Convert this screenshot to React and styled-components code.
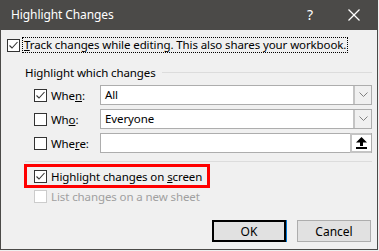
import React from 'react';
import styled, { createGlobalStyle } from 'styled-components';

const GlobalStyle = createGlobalStyle`
  html, body {
    margin: 0;
    padding: 0;
    background: #f0f0f0;
  }
  * {
    box-sizing: border-box;
  }
`;

const Check = ({ checked, disabled }) => (
  <CheckBox disabled={disabled}>
    {checked && (
      <svg width="11" height="11" viewBox="0 0 11 11">
        <polyline points="1.5,5.5 4,8 9.5,2" fill="none" stroke="#333" strokeWidth="1.1" />
      </svg>
    )}
  </CheckBox>
);

const Chevron = () => (
  <svg width="9" height="6" viewBox="0 0 9 6">
    <polyline points="0.5,0.5 4.5,4.5 8.5,0.5" fill="none" stroke="#808080" strokeWidth="1" />
  </svg>
);

const UploadArrow = () => (
  <svg width="11" height="12" viewBox="0 0 11 12">
    <polygon points="5.5,0 11,5.5 0,5.5" fill="#000" />
    <rect x="4" y="5" width="3" height="4" fill="#000" />
    <rect x="0" y="10" width="11" height="2" fill="#000" />
  </svg>
);

const CloseIcon = () => (
  <svg width="12" height="12" viewBox="0 0 12 12">
    <line x1="0.5" y1="0.5" x2="11.5" y2="11.5" stroke="#fff" strokeWidth="1.2" />
    <line x1="11.5" y1="0.5" x2="0.5" y2="11.5" stroke="#fff" strokeWidth="1.2" />
  </svg>
);

const fields = [
  { label: ['Whe', 'n', ':'], value: 'All', checked: true, kind: 'select' },
  { label: ['Wh', 'o', ':'], value: 'Everyone', checked: false, kind: 'select' },
  { label: ['Whe', 'r', 'e:'], value: '', checked: false, kind: 'range' },
];

export default function App() {
  return (
    <>
      <GlobalStyle />
      <Window>
        <TitleBar>
          <Title>Highlight Changes</Title>
          <Controls>
            <Help>?</Help>
            <CloseButton><CloseIcon /></CloseButton>
          </Controls>
        </TitleBar>
        <Body>
          <TrackRow>
            <Check checked />
            <FocusLabel><u>T</u>rack changes while editing. This also shares your workbook.</FocusLabel>
          </TrackRow>

          <GroupHeader>
            <GroupLabel>Highlight which changes</GroupLabel>
            <Line />
          </GroupHeader>

          <Fields>
            {fields.map((f) => (
              <FieldRow key={f.label.join('')}>
                <Check checked={f.checked} />
                <FieldLabel>
                  {f.label[0]}<u>{f.label[1]}</u>{f.label[2]}
                </FieldLabel>
                <Combo>
                  <ComboText>{f.value}</ComboText>
                  {f.kind === 'select' ? (
                    <DropButton><Chevron /></DropButton>
                  ) : (
                    <RangeButton><UploadArrow /></RangeButton>
                  )}
                </Combo>
              </FieldRow>
            ))}
          </Fields>

          <Separator />

          <Highlighted>
            <Check checked />
            <OptionLabel>Highlight changes on <u>s</u>creen</OptionLabel>
          </Highlighted>

          <OptionRow>
            <Check disabled />
            <OptionLabel disabled>List changes on a new sheet</OptionLabel>
          </OptionRow>

          <Buttons>
            <Button primary>OK</Button>
            <Button>Cancel</Button>
          </Buttons>
        </Body>
      </Window>
    </>
  );
}

// Styling
const Window = styled.div`
  width: 378px;
  height: 250px;
  display: flex;
  flex-direction: column;
  border: 1px solid #4b4a48;
  border-top: none;
  background: #f0f0f0;
  font-family: "Noto Sans", "Open Sans", sans-serif;
  font-size: 11.5px;
  letter-spacing: -0.1px;
  color: #000;
`;

const TitleBar = styled.div`
  height: 30px;
  flex-shrink: 0;
  display: flex;
  align-items: center;
  justify-content: space-between;
  background: #4b4a48;
  padding-left: 10px;
`;

const Title = styled.span`
  color: #fff;
  font-size: 12px;
  letter-spacing: -0.1px;
  margin-top: -1px;
`;

const Controls = styled.div`
  display: flex;
  align-items: center;
  height: 100%;
`;

const Help = styled.span`
  width: 42px;
  text-align: center;
  color: #fff;
  font-size: 14px;
  margin-top: -1px;
`;

const CloseButton = styled.span`
  width: 46px;
  height: 100%;
  display: flex;
  align-items: center;
  justify-content: center;
`;

const Body = styled.div`
  flex: 1;
  display: flex;
  flex-direction: column;
  padding: 7px 5px 0 6px;
`;

const CheckBox = styled.span`
  width: 13px;
  height: 13px;
  flex-shrink: 0;
  display: inline-flex;
  align-items: center;
  justify-content: center;
  background: #fff;
  border: 1px solid ${(p) => (p.disabled ? '#cccccc' : '#333333')};
`;

const TrackRow = styled.div`
  display: flex;
  align-items: center;
  height: 16px;
  gap: 2px;
`;

const FocusLabel = styled.span`
  border: 1px dotted #000;
  padding: 0 1px;
  height: 16px;
  line-height: 14px;
  white-space: nowrap;
`;

const GroupHeader = styled.div`
  display: flex;
  align-items: center;
  height: 16px;
  margin: 11px 0 0 18px;
`;

const GroupLabel = styled.span`
  white-space: nowrap;
`;

const Line = styled.div`
  flex: 1;
  height: 1px;
  margin-left: 6px;
  background: #dcdcdc;
`;

const Fields = styled.div`
  display: flex;
  flex-direction: column;
  gap: 4px;
  margin: 5px 0 0 27px;
`;

const FieldRow = styled.div`
  display: flex;
  align-items: center;
  height: 20px;
`;

const FieldLabel = styled.span`
  width: 53px;
  padding-left: 4px;
  flex-shrink: 0;
`;

const Combo = styled.div`
  flex: 1;
  height: 20px;
  display: flex;
  background: #fff;
  border: 1px solid #adadad;
`;

const ComboText = styled.span`
  flex: 1;
  padding-left: 4px;
  line-height: 18px;
`;

const DropButton = styled.span`
  width: 18px;
  display: flex;
  align-items: center;
  justify-content: center;
  background: #f0f0f0;
  border-left: 2px solid #c4c4c4;
`;

const RangeButton = styled.span`
  width: 21px;
  display: flex;
  align-items: center;
  justify-content: center;
  background: #fff;
  border: 2px solid #c4c4c4;
  border-right: none;
  margin: -1px 0;
`;

const Separator = styled.div`
  height: 1px;
  margin: 8px 0 0 18px;
  background: #dcdcdc;
`;

const Highlighted = styled.div`
  align-self: flex-start;
  display: flex;
  align-items: center;
  gap: 4px;
  height: 24px;
  margin: 2px 0 0 17px;
  padding: 0 5px 0 7px;
  border: 3px solid #ff0000;
`;

const OptionRow = styled.div`
  display: flex;
  align-items: center;
  gap: 4px;
  height: 16px;
  margin-left: 27px;
`;

const OptionLabel = styled.span`
  white-space: nowrap;
  color: ${(p) => (p.disabled ? '#a0a0a0' : '#000')};
`;

const Buttons = styled.div`
  display: flex;
  justify-content: flex-end;
  gap: 11px;
  margin: 16px 1px 0 0;
`;

const Button = styled.button`
  width: 74px;
  height: 22px;
  padding: 0;
  font-family: inherit;
  font-size: 12px;
  color: #000;
  background: #e1e1e1;
  border: ${(p) => (p.primary ? '2px solid #000' : '1px solid #adadad')};
  box-shadow: ${(p) => (p.primary ? '1px 0 0 #0078d7' : 'none')};
`;
